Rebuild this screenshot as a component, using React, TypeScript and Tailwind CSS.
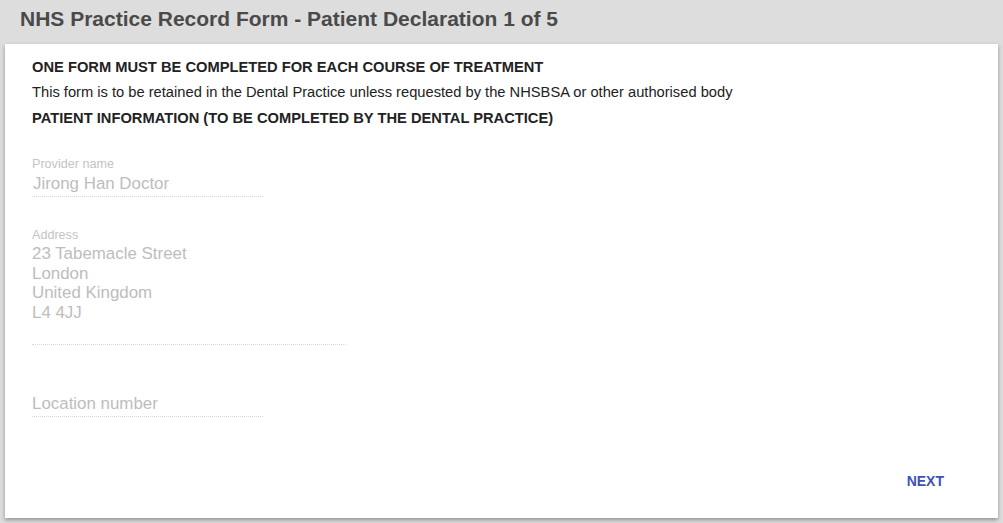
export default function App() {
  const font = { fontFamily: '"Liberation Sans", Arial, sans-serif' };
  return (
    <div className="w-[1003px] h-[523px] bg-[#dddddd] flex flex-col" style={font}>
      <div className="h-[44px] flex items-center pl-[20px] pb-[8px]">
        <h1 className="text-[21px] font-bold text-[#4a4a4a] leading-none">
          NHS Practice Record Form - Patient Declaration 1 of 5
        </h1>
      </div>
      <div className="mx-[5px] h-[474px] bg-white shadow-[0_2px_4px_rgba(0,0,0,0.35)] flex flex-col pl-[27px] pr-[54px] pt-[15px]">
        <div className="text-[14.7px] font-bold text-[#222] leading-[16px] h-[16px]">
          ONE FORM MUST BE COMPLETED FOR EACH COURSE OF TREATMENT
        </div>
        <div className="text-[14.7px] text-[#222] leading-[16px] mt-[9px]">
          This form is to be retained in the Dental Practice unless requested by the NHSBSA or other authorised body
        </div>
        <div className="text-[14.7px] font-bold text-[#222] leading-[16px] mt-[10px]">
          PATIENT INFORMATION (TO BE COMPLETED BY THE DENTAL PRACTICE)
        </div>

        <div className="mt-[31px] w-[231px] flex flex-col border-b border-dotted border-[#d8d8d8] pb-[3px]">
          <span className="text-[12.6px] text-[#c4c4c4] leading-[14px]">Provider name</span>
          <span className="text-[16.9px] text-[#bdbdbd] leading-[19px] mt-[3px] pl-[1px]">Jirong Han Doctor</span>
        </div>

        <div className="mt-[31px] w-[314px] flex flex-col border-b border-dotted border-[#d8d8d8] pb-[22px]">
          <span className="text-[12.6px] text-[#c4c4c4] leading-[14px]">Address</span>
          <div className="text-[16.9px] text-[#bdbdbd] leading-[19.5px] mt-[2px]">
            <div>23 Tabemacle Street</div>
            <div>London</div>
            <div>United Kingdom</div>
            <div>L4 4JJ</div>
          </div>
        </div>

        <div className="mt-[47px] w-[231px] border-b border-dotted border-[#d8d8d8] pb-0">
          <span className="text-[16.9px] text-[#bdbdbd] leading-[19px]">Location number</span>
        </div>

        <div className="flex justify-end mt-[56px]">
          <span className="text-[14px] font-bold text-[#3f51b5] leading-[16px]">NEXT</span>
        </div>
      </div>
    </div>
  );
}
